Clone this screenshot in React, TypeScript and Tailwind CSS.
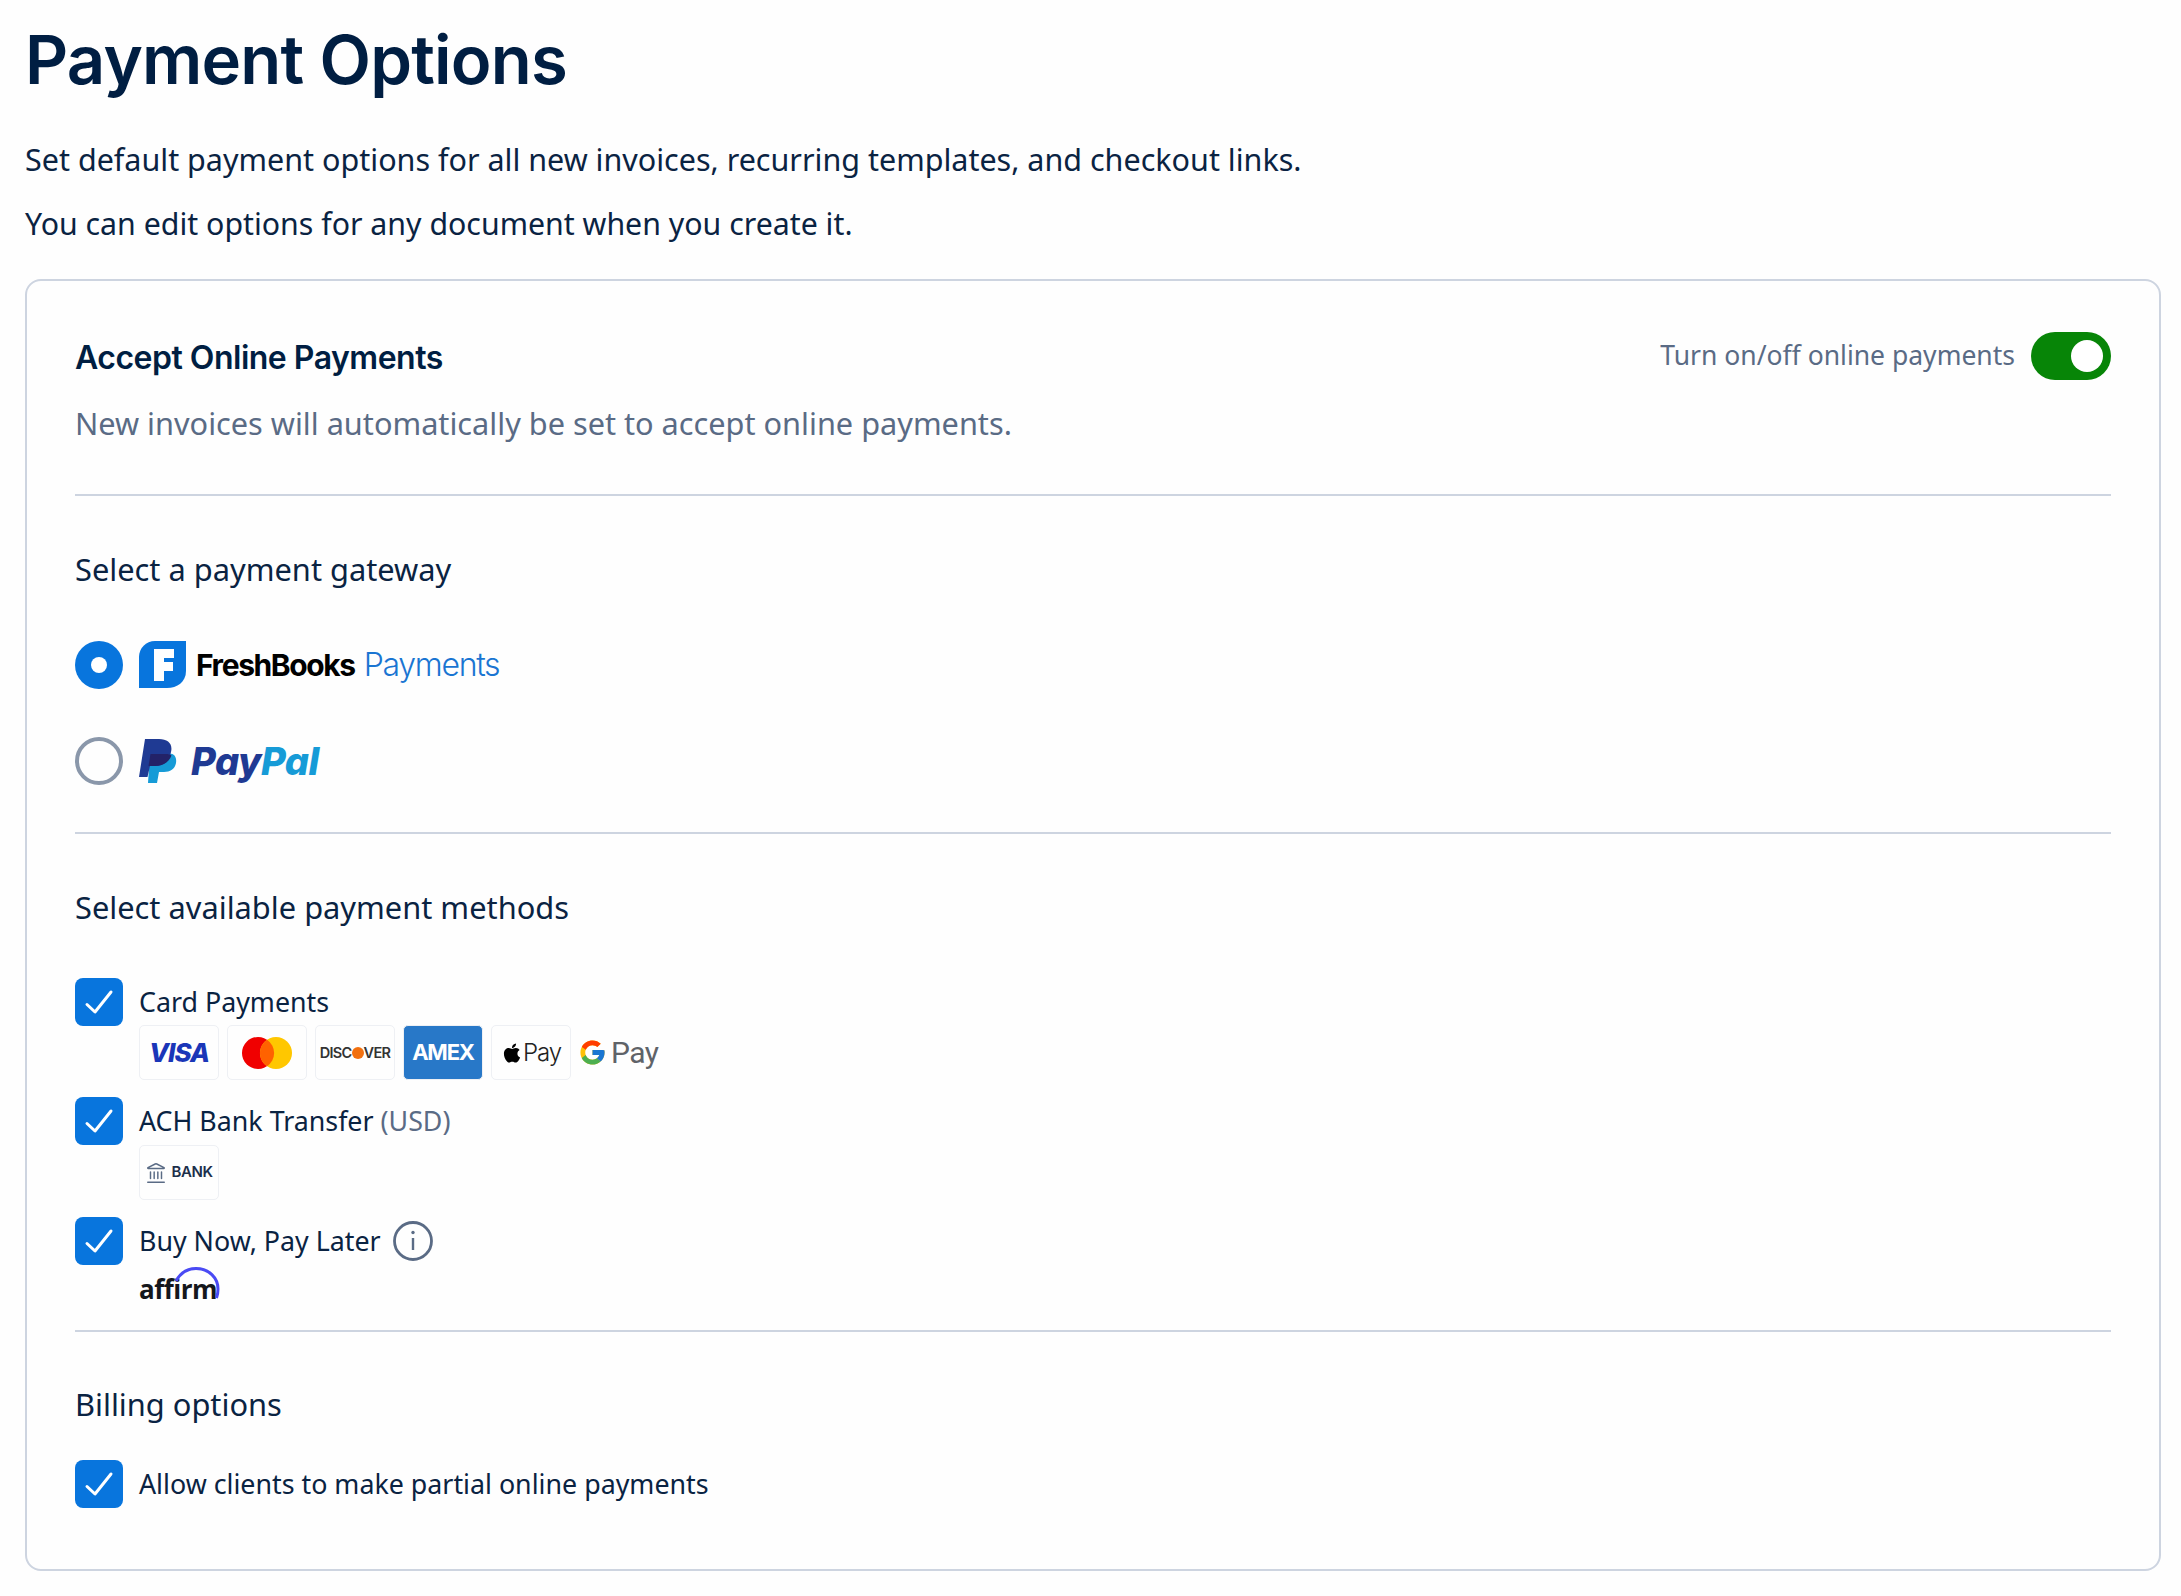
import React from "react";
import { FaApple } from "react-icons/fa";
import { FcGoogle } from "react-icons/fc";
import { Landmark } from "lucide-react";

const Divider = () => <div className="h-[2px] bg-[#cdd4e0]" />;

const Checkbox = () => (
  <div className="w-[48px] h-[48px] shrink-0 rounded-[8px] bg-[#0875dd] flex items-center justify-center">
    <svg width="30" height="26" viewBox="0 0 30 26" fill="none">
      <path d="M3 15.5 L11 23 L27 3" stroke="white" strokeWidth="3" strokeLinecap="round" strokeLinejoin="round" />
    </svg>
  </div>
);

const Tile: React.FC<{ children: React.ReactNode; className?: string }> = ({ children, className }) => (
  <div className={`w-[80px] h-[55px] rounded-[5px] border border-[#eef0f4] flex items-center justify-center ${className ?? ""}`}>
    {children}
  </div>
);

const FreshBooksMark = () => (
  <svg width="47" height="48" viewBox="0 0 47 48" className="shrink-0">
    <path d="M16 0 H47 V30 C47 41 38 47 28 47 H0 V16 C0 7 7 0 16 0 Z" fill="#0875dd" />
    <path d="M15 8 H35 V17 H25 V21 H34 V30 H25 V40 H15 Z" fill="white" />
  </svg>
);

const PayPalMark = () => (
  <svg width="38" height="45" viewBox="0 0 38 45" className="shrink-0">
    <path d="M11 15 H27 C35 13 38 18 37 24 C36 30 31 33 25 33 H20 L18 44 H9 Z" fill="#169bd7" />
    <path d="M6 0 H20 C29 0 34 5 32 13 C30 23 24 27 16 27 H11 L8.5 38 H0 Z" fill="#1f3a93" />
    <path d="M11.5 15 H27 C29 15 31 15.5 32.5 16.5 C30 23 24 27 16 27 H9.5 Z" fill="#232268" />
  </svg>
);

const MethodRow: React.FC<{ label: React.ReactNode; children: React.ReactNode }> = ({ label, children }) => (
  <div className="flex gap-[16px]">
    <Checkbox />
    <div>
      <div className="h-[48px] flex items-center gap-[12px] text-[26.8px] text-[#0a2342]">{label}</div>
      {children}
    </div>
  </div>
);

export default function App() {
  return (
    <div className="min-h-screen bg-[#fefefe] pl-[25px] pr-[20px] font-['Noto_Sans',sans-serif] text-[#0a2342]">
      <h1 className="font-['Inter',sans-serif] font-semibold text-[67px] leading-[78px] pt-[21px] tracking-[-0.8px] text-[#001e42]">
        Payment Options
      </h1>
      <p className="mt-[40px] text-[30.5px] leading-[40px]">
        Set default payment options for all new invoices, recurring templates, and checkout links.
      </p>
      <p className="mt-[25px] text-[30.3px] leading-[40px]">You can edit options for any document when you create it.</p>

      <section className="mt-[35px] h-[1292px] rounded-[16px] border-2 border-[#cdd4e0] px-[48px]">
        <div className="pt-[51px] flex items-start justify-between">
          <div>
            <h2 className="font-['Inter',sans-serif] font-semibold text-[32px] leading-[52px] text-[#001e42] tracking-[-0.5px]">
              Accept Online Payments
            </h2>
            <p className="mt-[19px] text-[30.7px] leading-[40px] text-[#5a6b85]">
              New invoices will automatically be set to accept online payments.
            </p>
          </div>
          <div className="flex items-center gap-[16px]">
            <span className="text-[26.5px] text-[#5a6b85]">Turn on/off online payments</span>
            <div className="w-[80px] h-[48px] rounded-full bg-[#078507] flex items-center justify-end pr-[8px]">
              <div className="w-[32px] h-[32px] rounded-full bg-white" />
            </div>
          </div>
        </div>

        <div className="mt-[51px]"><Divider /></div>

        <h3 className="mt-[53px] text-[30.8px] leading-[40px]">Select a payment gateway</h3>
        <div className="mt-[52px] flex items-center gap-[16px] h-[48px]">
          <div className="w-[48px] h-[48px] rounded-full bg-[#0875dd] flex items-center justify-center">
            <div className="w-[16px] h-[16px] rounded-full bg-white" />
          </div>
          <FreshBooksMark />
          <span className="font-['Inter',sans-serif] font-bold text-[30px] tracking-[-1.4px] text-black ml-[-6px]">FreshBooks</span>
          <span className="font-['Inter',sans-serif] font-light text-[32px] tracking-[-1.3px] text-[#1a75d2] ml-[-7px]">Payments</span>
        </div>
        <div className="mt-[48px] flex items-center gap-[16px] h-[48px]">
          <div className="w-[48px] h-[48px] rounded-full border-[4px] border-[#8a97aa]" />
          <PayPalMark />
          <span className="font-['Inter',sans-serif] font-extrabold italic text-[38px] tracking-[-0.5px] ml-[-2px]">
            <span className="text-[#1f3a93]">Pay</span>
            <span className="text-[#169bd7]">Pal</span>
          </span>
        </div>

        <div className="mt-[47px]"><Divider /></div>

        <h3 className="mt-[53px] text-[30.8px] leading-[40px]">Select available payment methods</h3>

        <div className="mt-[51px] flex flex-col">
          <MethodRow label="Card Payments">
            <div className="flex gap-[8px] mt-[-1px]">
              <Tile>
                <span className="font-['Inter',sans-serif] font-extrabold italic text-[26px] tracking-[-1px] text-[#1a36b8]">VISA</span>
              </Tile>
              <Tile>
                <svg width="50" height="32" viewBox="0 0 50 32">
                  <circle cx="16" cy="16" r="16" fill="#f00000" />
                  <circle cx="34" cy="16" r="16" fill="#ffc700" />
                  <path d="M25 2.7 A16 16 0 0 1 25 29.3 A16 16 0 0 1 25 2.7 Z" fill="#ff6200" />
                </svg>
              </Tile>
              <Tile>
                <span className="font-['Inter',sans-serif] font-semibold text-[14.5px] tracking-[-0.7px] text-[#333] flex items-center">
                  DISC<span className="inline-block w-[12px] h-[12px] rounded-full bg-[#f2700f]" />VER
                </span>
              </Tile>
              <Tile className="bg-[#2878c8] border-[#2878c8]">
                <span className="font-['Inter',sans-serif] font-bold text-[22px] tracking-[-1.2px] text-white">AMEX</span>
              </Tile>
              <Tile>
                <FaApple className="text-[22px] text-black" />
                <span className="font-['Inter',sans-serif] font-light text-[24px] tracking-[-1px] text-[#222]">Pay</span>
              </Tile>
              <div className="h-[55px] flex items-center gap-[4px] ml-[-1px]">
                <FcGoogle className="text-[29px]" />
                <span className="font-['Roboto',sans-serif] text-[30px] tracking-[-0.5px] text-[#5f6368]">Pay</span>
              </div>
            </div>
          </MethodRow>

          <div className="mt-[17px]">
            <MethodRow
              label={
                <span>
                  ACH Bank Transfer <span className="text-[#5a6b85]">(USD)</span>
                </span>
              }
            >
              <Tile>
                <div className="flex items-center gap-[4px]">
                  <Landmark size={22} strokeWidth={1.6} className="text-[#5a6b85]" />
                  <span className="font-['Inter',sans-serif] font-semibold text-[15px] tracking-[-0.4px] text-[#1c2f4a]">BANK</span>
                </div>
              </Tile>
            </MethodRow>
          </div>

          <div className="mt-[17px]">
            <MethodRow
              label={
                <>
                  <span>Buy Now, Pay Later</span>
                  <svg width="40" height="40" viewBox="0 0 40 40" fill="none">
                    <circle cx="20" cy="20" r="18.5" stroke="#5a6b85" strokeWidth="2.8" />
                    <path d="M20 17 V29" stroke="#5a6b85" strokeWidth="2.4" />
                    <circle cx="20" cy="11.5" r="1.7" fill="#5a6b85" />
                  </svg>
                </>
              }
            >
              <div className="relative mt-[2px] h-[32px] w-[80px]">
                <span className="absolute left-0 bottom-[-10px] font-['Open_Sans',sans-serif] font-bold text-[26px] tracking-[-0.5px] text-[#14171c]">affirm</span>
                <svg className="absolute left-[36px] top-0" width="45" height="32" viewBox="0 0 45 32" fill="none">
                  <path d="M1 14 C6 5 14 1.5 21 1.5 C34 1.5 43 11 43 22 C43 25 42.6 28 41.5 31" stroke="#4a4af4" strokeWidth="3" />
                </svg>
              </div>
            </MethodRow>
          </div>
        </div>

        <div className="mt-[31px]"><Divider /></div>

        <h3 className="mt-[52px] text-[30.8px] leading-[40px]">Billing options</h3>
        <div className="mt-[36px] flex items-center gap-[16px]">
          <Checkbox />
          <span className="text-[26.8px]">Allow clients to make partial online payments</span>
        </div>
      </section>
    </div>
  );
}
